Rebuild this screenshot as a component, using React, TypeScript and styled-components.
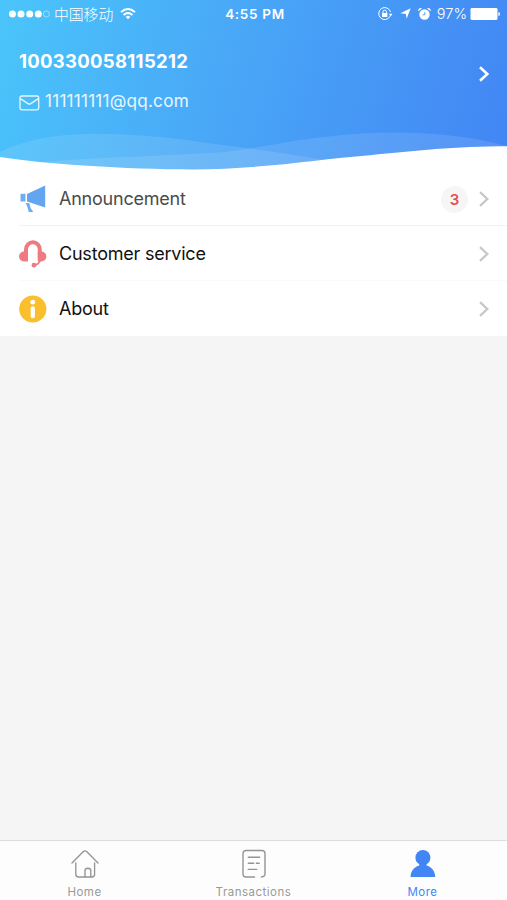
import React from "react";
import styled, { createGlobalStyle } from "styled-components";

const GlobalStyle = createGlobalStyle`
  * { box-sizing: border-box; }
  body { margin: 0; background: #f5f5f5; font-family: Inter, "Noto Sans CJK SC", sans-serif; }
  svg { display: block; flex: none; }
`;

const Screen = styled.main`
  width: 100%;
  height: 100vh;
  display: flex;
  flex-direction: column;
  background: #f5f5f5;
`;

const Header = styled.header`
  height: 171px;
  flex: none;
  display: flex;
  flex-direction: column;
  color: #fff;
  background: linear-gradient(107deg, #4ac5fa 0%, #49a7f7 45%, #4285f4 100%);
`;

const StatusBar = styled.div`
  height: 27px;
  padding: 0 6px 0 9px;
  display: grid;
  grid-template-columns: 1fr auto 1fr;
  align-items: center;
`;

const StatusGroup = styled.div`
  display: flex;
  align-items: center;
`;

const StatusIcons = styled(StatusGroup)`
  justify-content: flex-end;
`;

const IconCluster = styled.div`
  display: flex;
  align-items: center;
  gap: 7px;
`;

const Carrier = styled.span`
  margin: 0 7px 0 4px;
  font: 300 14.8px/20px "Noto Sans CJK SC", sans-serif;
`;

const Time = styled.span`
  font-size: 13.5px;
  font-weight: 600;
  line-height: 20px;
  letter-spacing: 0.7px;
`;

const Percent = styled.span`
  margin: 0 3px 0 6px;
  font-size: 14.5px;
  font-weight: 300;
  line-height: 20px;
`;

const Profile = styled.section`
  flex: 1;
  display: flex;
  justify-content: space-between;
  padding: 22px 17px 0 19px;
`;

const ProfileText = styled.div`
  display: flex;
  flex-direction: column;
`;

const Account = styled.strong`
  font-size: 18.5px;
  font-weight: 700;
  line-height: 25px;
  letter-spacing: 0.3px;
`;

const Email = styled.div`
  display: flex;
  align-items: center;
  gap: 5px;
  margin-top: 15px;
  font-size: 17.2px;
  line-height: 24px;
  letter-spacing: 0.2px;
  color: #e9f6ff;
  svg { margin-top: 4px; }
`;

const ProfileArrow = styled.div`
  padding-top: 17px;
`;

const List = styled.ul`
  list-style: none;
  margin: 0;
  padding: 0;
  background: #fff;
`;

const Row = styled.li`
  height: 55px;
  padding-left: 19px;
`;

const RowBody = styled.div<{ $line: string; $color: string }>`
  height: 100%;
  display: flex;
  align-items: center;
  padding: 2px 17px 0 0;
  border-bottom: 1px solid ${(p) => p.$line};
  color: ${(p) => p.$color};
`;

const RowLabel = styled.span`
  flex: 1;
  margin-left: 12px;
  font-size: 18px;
  line-height: 24px;
  letter-spacing: -0.22px;
`;

const Badge = styled.span`
  width: 27px;
  height: 27px;
  margin-right: 10px;
  border-radius: 50%;
  background: #f6f6f6;
  color: #e05252;
  font-size: 15px;
  font-weight: 600;
  line-height: 27px;
  text-align: center;
`;

const TabBar = styled.nav`
  height: 60px;
  margin-top: auto;
  display: grid;
  grid-template-columns: repeat(3, 1fr);
  background: #fdfdfd;
  border-top: 1px solid #dedede;
`;

const Tab = styled.div<{ $active?: boolean }>`
  display: flex;
  flex-direction: column;
  align-items: center;
  padding-top: 8px;
  gap: 6px;
  color: ${(p) => (p.$active ? "#4285f4" : "#999")};
  font-size: 11.5px;
  line-height: 14px;
  letter-spacing: 0.5px;
`;

const Chevron = ({ color, width = 2.3 }: { color: string; width?: number }) => (
  <svg width="12" height="16" viewBox="0 0 12 16" fill="none" stroke={color} strokeWidth={width}>
    <path d="M2 1.2 9.3 8 2 14.8" />
  </svg>
);

const SignalDots = () => (
  <svg width="41" height="8" viewBox="0 0 41 8" fill="#fff">
    {[3.4, 12, 20.7, 29.3].map((x) => (
      <circle key={x} cx={x} cy="4" r="3.5" />
    ))}
    <circle cx="37.4" cy="4" r="3" fill="none" stroke="#fff" strokeOpacity=".65" strokeWidth=".7" />
  </svg>
);

const Wifi = () => (
  <svg width="16" height="12" viewBox="0 0 16 12" fill="none" stroke="#fff" strokeWidth="1.9">
    <path d="M1 4.1Q8-2 15 4.1M3.6 7Q8 3.1 12.4 7" />
    <path d="M5.7 8.7Q8 7 10.3 8.7L8 11.3Z" fill="#fff" stroke="none" />
  </svg>
);

const RotationLock = () => (
  <svg width="15" height="14" viewBox="0 0 15 14" fill="none" stroke="#fff">
    <path d="M12.1 9.2A6 6 0 1 1 12.5 5" strokeWidth="1" />
    <path d="m10.7 6.7 3.8 0-1.8 2.7Z" fill="#fff" stroke="none" />
    <path d="M5 6V4.8a1.7 1.7 0 0 1 3.4 0V6" strokeWidth="1" />
    <rect x="4" y="6" width="5.4" height="4" fill="#fff" stroke="none" />
  </svg>
);

const LocationArrow = () => (
  <svg width="11" height="11" viewBox="0 0 11 11" fill="#fff">
    <path d="M10.7.3 6.6 10.7 5.9 5.9.3 5.2Z" />
  </svg>
);

const Alarm = () => (
  <svg width="13" height="12" viewBox="0 0 13 12" fill="#fff">
    <path d="M.2 3.2A2.6 2.6 0 0 1 4 .4ZM12.8 3.2A2.6 2.6 0 0 0 9 .4Z" />
    <circle cx="6.5" cy="6.5" r="5.2" />
    <path d="M6.8 4v2.8H4.6" fill="none" stroke="#4799f7" strokeWidth=".9" />
  </svg>
);

const Battery = () => (
  <svg width="31" height="12" viewBox="0 0 31 12" fill="#fff">
    <rect x=".5" y="0" width="27" height="12" rx="1.4" />
    <path d="M28.4 4Q30 4.2 30 6t-1.6 2Z" />
  </svg>
);

const Envelope = () => (
  <svg width="21" height="16" viewBox="0 0 21 16" fill="none" stroke="#e9f6ff" strokeWidth="1.3">
    <rect x="1" y="1" width="18.7" height="13.8" rx="1.8" />
    <path d="m1.3 3.6 7.7 5Q10.4 9.5 11.8 8.6l7.6-5" />
  </svg>
);

const Waves = () => (
  <svg width="100%" height="41" viewBox="0 130 507 41" preserveAspectRatio="none">
    <path d="M0 152C28 138 62 133.5 100 133.8C160 134.5 205 143 253 149Q292 154 325 160L320 171H0Z" fill="#fff" fillOpacity=".11" />
    <path d="M45 162C100 157 165 156 215 152.8C257 149 285 141 325 137C370 131 415 131.5 450 135.5Q483 139 507 146.3V171H45Z" fill="#fff" fillOpacity=".11" />
    <path d="M0 157C45 164 125 169.4 193 169.4C260 169.4 315 159.5 370 155.2C415 150.8 455 146.3 507 146.3V171H0Z" fill="#fff" />
  </svg>
);

const Megaphone = () => (
  <svg width="28" height="28" viewBox="0 0 28 28" fill="#62a5f0">
    <path d="M8 9 26.2.6v21.8L8 16.6Z" />
    <rect x="1.5" y="8.8" width="5" height="7.7" fill="#70adf1" />
    <path d="M6.8 18h3.5q.5 5 4 9.1H9.8Q8.9 23 6.8 18Z" fill="#70adf1" />
  </svg>
);

const Headset = () => (
  <svg width="28" height="28" viewBox="0 0 28 28" fill="none">
    <path d="M7 19V9.5a6.9 7.2 0 0 1 13.8 0V19" stroke="#ee7a82" strokeWidth="4" />
    <path d="M9 11.6v9.9H5a4.9 4.9 0 0 1 0-9.9ZM18.8 11.6v9.9h3.6a4.9 4.9 0 0 0 0-9.9Z" fill="#ee7a82" />
    <path d="M21.2 20q-.7 4-6 5.2" stroke="#ee7a82" strokeWidth="1.5" />
    <circle cx="15" cy="25.2" r="2.4" fill="#ee7a82" />
  </svg>
);

const Info = () => (
  <svg width="28" height="28" viewBox="0 0 28 28">
    <circle cx="13.8" cy="14" r="13.6" fill="#f9bf2c" />
    <circle cx="13.8" cy="7.2" r="2.4" fill="#fff" />
    <path d="M13.8 13.3v7.9" stroke="#fff" strokeWidth="4.2" strokeLinecap="round" />
  </svg>
);

const Home = () => (
  <svg width="28" height="30" viewBox="0 0 28 30" fill="none" stroke="#949494" strokeWidth="1.35" strokeLinecap="round" strokeLinejoin="round">
    <path d="M1 14 12.4 2.6q1.6-1.5 3.2 0L27 14M4.8 13.8v11.4q0 2.8 2.8 2.8h13.2q2.8 0 2.8-2.8V13.8" />
    <path d="M14 27.8v-6.2q0-2.4 2.9-2.4t2.9 2.4v6.2" />
  </svg>
);

const Document = () => (
  <svg width="28" height="30" viewBox="0 0 28 30" fill="none" stroke="#949494" strokeWidth="1.4" strokeLinecap="round" strokeLinejoin="round">
    <path d="M14.5 28H6.2Q3 28 3 24.8V4.6Q3 1.5 6.2 1.5h15.6Q25 1.5 25 4.6v20.2q0 2.8-3.5 3.2" />
    <path d="M8.3 8.2h11.4M8.3 14.3h5.4M16.4 14.3h2.8M8.3 20.4h8.4" />
  </svg>
);

const Person = () => (
  <svg width="28" height="30" viewBox="0 0 28 30" fill="#4285f4">
    <ellipse cx="13.9" cy="8.7" rx="7.5" ry="7.6" />
    <path d="M10.3 14.3h7.2v2.2C22.2 17.8 26 21.5 26.3 28H1.5C1.8 21.5 5.6 17.8 10.3 16.5Z" />
  </svg>
);

const rows = [
  { label: "Announcement", icon: <Megaphone />, line: "#f3f3f3", color: "#4b4b4b", badge: 3 },
  { label: "Customer service", icon: <Headset />, line: "#fafafa", color: "#111" },
  { label: "About", icon: <Info />, line: "transparent", color: "#111" },
];

export default function App() {
  return (
    <Screen>
      <GlobalStyle />
      <Header>
        <StatusBar>
          <StatusGroup>
            <SignalDots />
            <Carrier>中国移动</Carrier>
            <Wifi />
          </StatusGroup>
          <Time>4:55 PM</Time>
          <StatusIcons>
            <IconCluster>
              <RotationLock />
              <LocationArrow />
              <Alarm />
            </IconCluster>
            <Percent>97%</Percent>
            <Battery />
          </StatusIcons>
        </StatusBar>
        <Profile>
          <ProfileText>
            <Account>100330058115212</Account>
            <Email>
              <Envelope />
              <span>111111111@qq.com</span>
            </Email>
          </ProfileText>
          <ProfileArrow>
            <Chevron color="#fff" width={2.6} />
          </ProfileArrow>
        </Profile>
        <Waves />
      </Header>
      <List>
        {rows.map((row) => (
          <Row key={row.label}>
            <RowBody $line={row.line} $color={row.color}>
              {row.icon}
              <RowLabel>{row.label}</RowLabel>
              {row.badge && <Badge>{row.badge}</Badge>}
              <Chevron color="#c8c8c8" />
            </RowBody>
          </Row>
        ))}
      </List>
      <TabBar>
        <Tab>
          <Home />
          Home
        </Tab>
        <Tab>
          <Document />
          Transactions
        </Tab>
        <Tab $active>
          <Person />
          More
        </Tab>
      </TabBar>
    </Screen>
  );
}
